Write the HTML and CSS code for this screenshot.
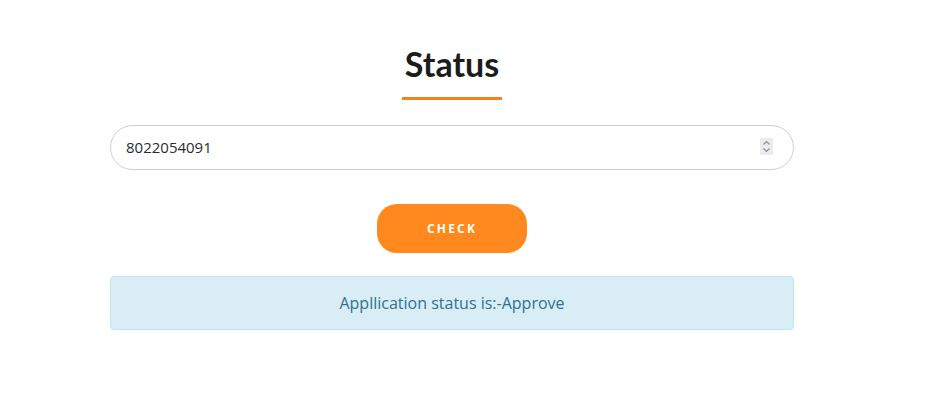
FILE: index.html
```html
<!DOCTYPE html>
<html lang="en">
<head>
<meta charset="utf-8">
<title>Status</title>
<link rel="stylesheet" href="styles.css">
</head>
<body>
<main class="page">
  <section class="status-box">
    <h2 class="title">Status</h2>
    <form class="status-form">
      <div class="field-wrap">
        <input class="field" type="text" value="8022054091">
        <span class="spinner" aria-hidden="true">
          <svg width="13" height="17" viewBox="0 0 13 17">
            <path d="M3.5 6.5 L6.5 3.5 L9.5 6.5" fill="none" stroke="#8e8e99" stroke-width="1.2"/>
            <path d="M3.5 10.5 L6.5 13.5 L9.5 10.5" fill="none" stroke="#8e8e99" stroke-width="1.2"/>
          </svg>
        </span>
      </div>
      <button class="btn" type="button">CHECK</button>
    </form>
    <div class="alert">Appllication status is:-Approve</div>
  </section>
</main>
</body>
</html>
```

FILE: styles.css
```css
* { box-sizing: border-box; }
html, body { margin: 0; padding: 0; background: #fff; }
body { font-family: "Open Sans", sans-serif; }
.page { padding: 41px 0 0 110px; }
.status-box { width: 684px; display: flex; flex-direction: column; align-items: center; }
.title {
  font-family: Lato, sans-serif;
  font-weight: 700;
  font-size: 34px;
  line-height: 46px;
  color: #1c1c1c;
  margin: 0;
  text-align: center;
}
.title::after {
  content: "";
  display: block;
  width: 100px;
  height: 3px;
  background: #f58220;
  margin: 10px auto 0;
}
.status-form { width: 100%; display: flex; flex-direction: column; align-items: center; margin-top: 25px; }
.field-wrap { width: 100%; position: relative; }
.field {
  display: block;
  width: 100%;
  height: 45px;
  border: 1px solid #cfcfcf;
  border-radius: 23px;
  padding: 0 40px 1px 15px;
  font-family: "Open Sans", sans-serif;
  font-size: 15px;
  color: #2b2b2b;
  outline: none;
}
.spinner {
  position: absolute;
  left: 650px;
  top: 13px;
  width: 13px;
  height: 17px;
  background: #ebebf0;
  display: flex;
}
.btn {
  margin-top: 34px;
  width: 150px;
  height: 49px;
  border: none;
  border-radius: 20px;
  background: #ff891e;
  color: #fff;
  font-family: "Open Sans", sans-serif;
  font-weight: 700;
  font-size: 12px;
  letter-spacing: 2.2px;
}
.alert {
  width: 100%;
  margin-top: 23px;
  height: 54px;
  display: flex;
  align-items: center;
  justify-content: center;
  background: #d9edf7;
  border: 1px solid #bce8f1;
  border-radius: 4px;
  color: #31708f;
  font-size: 16px;
}
```
